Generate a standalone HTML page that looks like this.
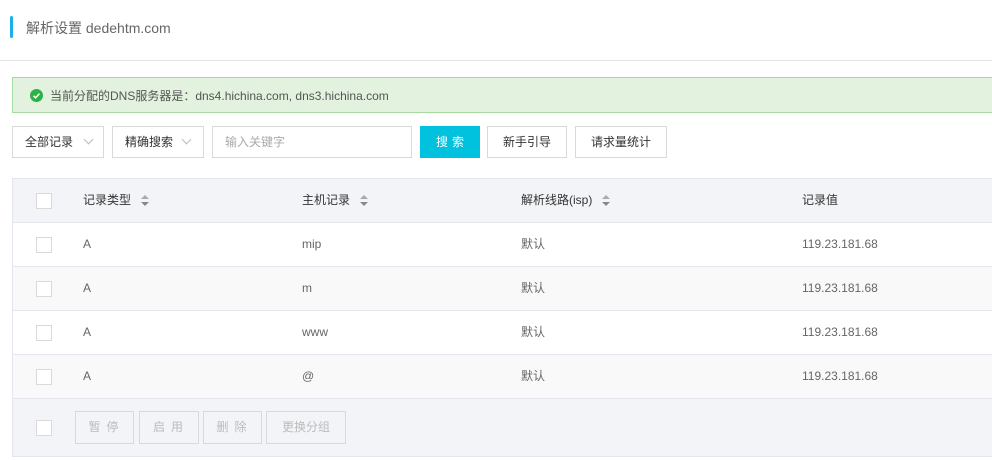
<!DOCTYPE html>
<html><head><meta charset="utf-8"><style>
*{box-sizing:border-box;margin:0;padding:0}
body{width:992px;height:460px;background:#fff;font-family:"Liberation Sans","Noto Sans CJK SC",sans-serif;font-size:12px;color:#333;position:relative;overflow:hidden}
.abs{position:absolute}
.bar{left:10px;top:16px;width:3px;height:22px;background:#1ab0f0;border-radius:2px}
.title{left:26px;top:18px;font-size:14px;color:#666;line-height:20px}
.sep{left:0;top:60px;width:992px;height:1px;background:#e5e5e5}
.alert{left:12px;top:77px;width:990px;height:36px;background:#e3f1df;border:1px solid #a7d9a0;}
.alert .t{position:absolute;left:37px;top:10px;color:#555;line-height:16px}
.ok{position:absolute;left:17px;top:11px;width:13px;height:13px;border-radius:50%;background:#2db24a}
.box{border:1px solid #d9d9d9;height:32px;top:126px;line-height:30px;color:#333;background:#fff}
.arr{position:absolute;top:9px;width:7px;height:7px;border-right:1px solid #bbb;border-bottom:1px solid #bbb;transform:rotate(45deg)}
.btn{text-align:center}
.tbl{left:12px;top:178px;width:990px;height:279px;border:1px solid #e3e6ec;border-right:none}
.row{position:absolute;left:0;width:990px;height:44px;border-bottom:1px solid #e3e6ec;line-height:43px;color:#666}
.cb{position:absolute;left:23px;top:14px;width:16px;height:16px;border:1px solid #d9d9d9;background:#fff}
.c{position:absolute}
.sort{display:inline-block;vertical-align:middle;margin-left:10px;width:8px;height:14px;position:relative}
.sort:before{content:"";position:absolute;top:1px;left:0;border:4px solid transparent;border-bottom:4px solid #aaa;border-top:0}
.sort:after{content:"";position:absolute;top:8px;left:0;border:4px solid transparent;border-top:4px solid #888;border-bottom:0}
.fb{position:absolute;top:12px;height:33px;border:1px solid #d9d9d9;line-height:31px;text-align:center;color:#bbb;background:#f3f4f8;letter-spacing:2px}
</style></head><body>
<div class="abs bar"></div>
<div class="abs title">解析设置 dedehtm.com</div>
<div class="abs sep"></div>
<div class="abs alert"><div class="ok"><svg width="13" height="13" viewBox="0 0 13 13"><path d="M3.5 6.8L5.6 8.8L9.4 4.6" fill="none" stroke="#fff" stroke-width="1.5"/></svg></div><div class="t">当前分配的DNS服务器是：dns4.hichina.com, dns3.hichina.com</div></div>
<div class="abs box" style="left:12px;width:92px;padding-left:12px">全部记录<span class="arr" style="left:72px"></span></div>
<div class="abs box" style="left:112px;width:92px;padding-left:12px">精确搜索<span class="arr" style="left:70px"></span></div>
<div class="abs box" style="left:212px;width:200px;padding-left:12px;color:#aaa">输入关键字</div>
<div class="abs box btn" style="left:420px;width:60px;background:#00c1de;border-color:#00c1de;color:#fff;letter-spacing:4px;padding-left:4px">搜索</div>
<div class="abs box btn" style="left:487px;width:80px">新手引导</div>
<div class="abs box btn" style="left:575px;width:92px">请求量统计</div>
<div class="abs tbl">
<div class="row" style="top:0;background:#f3f4f8;color:#333"><div class="cb"></div><div class="c" style="left:70px">记录类型<span class="sort"></span></div><div class="c" style="left:289px">主机记录<span class="sort"></span></div><div class="c" style="left:508px">解析线路(isp)<span class="sort"></span></div><div class="c" style="left:789px">记录值</div></div>
<div class="row" style="top:44px"><div class="cb"></div><div class="c" style="left:70px">A</div><div class="c" style="left:289px">mip</div><div class="c" style="left:508px">默认</div><div class="c" style="left:789px">119.23.181.68</div></div>
<div class="row" style="top:88px;background:#f9f9f9"><div class="cb"></div><div class="c" style="left:70px">A</div><div class="c" style="left:289px">m</div><div class="c" style="left:508px">默认</div><div class="c" style="left:789px">119.23.181.68</div></div>
<div class="row" style="top:132px"><div class="cb"></div><div class="c" style="left:70px">A</div><div class="c" style="left:289px">www</div><div class="c" style="left:508px">默认</div><div class="c" style="left:789px">119.23.181.68</div></div>
<div class="row" style="top:176px;background:#f9f9f9"><div class="cb"></div><div class="c" style="left:70px">A</div><div class="c" style="left:289px">@</div><div class="c" style="left:508px">默认</div><div class="c" style="left:789px">119.23.181.68</div></div>
<div class="row" style="top:220px;height:57px;background:#f3f4f8;border-bottom:none"><div class="cb" style="top:21px"></div>
<div class="fb" style="left:62px;width:59px;letter-spacing:6px;padding-left:4px">暂停</div>
<div class="fb" style="left:126px;width:60px;letter-spacing:6px;padding-left:4px">启用</div>
<div class="fb" style="left:190px;width:59px;letter-spacing:6px;padding-left:4px">删除</div>
<div class="fb" style="left:253px;width:80px;letter-spacing:0">更换分组</div>
</div>
</div>
</body></html>
